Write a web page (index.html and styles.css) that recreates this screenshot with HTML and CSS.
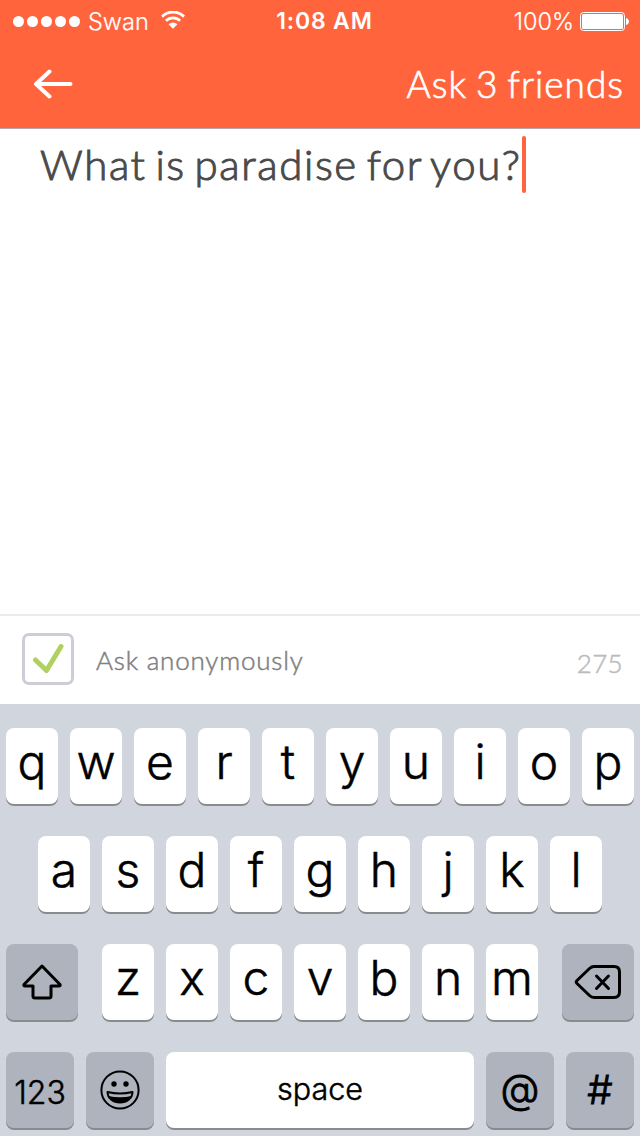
FILE: index.html
```html
<!DOCTYPE html>
<html lang="en">
<head>
    <meta charset="UTF-8">
    <meta name="viewport" content="width=device-width, initial-scale=1.0">
    <title>Ask friends</title>
    <link rel="stylesheet" href="styles.css">
</head>
<body>
    <div class="screen">
        <header class="header">
            <div class="status">
                <div class="carrier">
                    <div class="signal"><i></i><i></i><i></i><i></i><i></i></div>
                    <span class="carrier-name">Swan</span>
                    <svg class="wifi" width="24" height="18" viewBox="0 0 24 18">
                        <path d="M1 5.6a15.6 15.6 0 0 1 22 0" fill="none" stroke="#fff" stroke-width="2.9"/>
                        <path d="M4.9 9.8a10 10 0 0 1 14.2 0" fill="none" stroke="#fff" stroke-width="2.7"/>
                        <path d="M12 17.8L7.6 13.3a6.3 6.3 0 0 1 8.8 0z" fill="#fff"/>
                    </svg>
                </div>
                <div class="time">1:08 AM</div>
                <div class="power">
                    <span class="percent">100%</span>
                    <svg class="battery" width="49" height="19" viewBox="0 0 49 19">
                        <rect x=".5" y=".5" width="44" height="18" rx="3" fill="none" stroke="#fff"/>
                        <rect x="2" y="2" width="41" height="15" rx="1.5" fill="#fff"/>
                        <path d="M46 6c4 1 4 6 0 7z" fill="#fff"/>
                    </svg>
                </div>
            </div>
            <div class="nav">
                <svg class="back" width="40" height="30" viewBox="0 0 40 30" fill="none" stroke="#fff" stroke-width="4" stroke-linecap="round" stroke-linejoin="round">
                    <path d="M16.500 2.500L3 15l13.500 12.500M4 15h33.500"/>
                </svg>
                <div class="nav-action">Ask 3 friends</div>
            </div>
        </header>

        <main class="editor">
            <span class="question">What is paradise for you?</span><span class="caret"></span>
        </main>

        <div class="options">
            <div class="checkbox">
                <svg width="32" height="30" viewBox="0 0 32 30" fill="none" stroke="#b0d15f" stroke-width="5" stroke-linecap="round" stroke-linejoin="round">
                    <path d="M3.500 16L14.500 26.500L29 2.500"/>
                </svg>
            </div>
            <span class="anon">Ask anonymously</span>
            <span class="count">275</span>
        </div>

        <div class="keyboard">
            <div class="row">
                <div class="key">q</div><div class="key">w</div><div class="key">e</div><div class="key">r</div><div class="key">t</div><div class="key">y</div><div class="key">u</div><div class="key">i</div><div class="key">o</div><div class="key">p</div>
            </div>
            <div class="row">
                <div class="key">a</div><div class="key">s</div><div class="key">d</div><div class="key">f</div><div class="key">g</div><div class="key">h</div><div class="key">j</div><div class="key">k</div><div class="key">l</div>
            </div>
            <div class="row row-shift">
                <div class="key dark wide">
                    <svg width="40" height="36" viewBox="0 0 40 36" fill="none" stroke="#000" stroke-width="3" stroke-linejoin="round">
                        <path d="M20 2L38 20.500Q38.500 22 37 22H29V32Q29 34 27 34H13Q11 34 11 32V22H3Q1.500 22 2 20.500Z"/>
                    </svg>
                </div>
                <div class="letters">
                    <div class="key">z</div><div class="key">x</div><div class="key">c</div><div class="key">v</div><div class="key">b</div><div class="key">n</div><div class="key">m</div>
                </div>
                <div class="key dark wide">
                    <svg width="48" height="36" viewBox="0 0 48 36" fill="none" stroke="#000" stroke-width="3" stroke-linejoin="round" stroke-linecap="round">
                        <path d="M20 2.500H40Q45.500 2.500 45.500 8V28Q45.500 33.500 40 33.500H20Q17.500 33.500 15.500 31.500L3 19.500Q1.500 18 3 16.500L15.500 4.500Q17.500 2.500 20 2.500Z"/>
                        <path d="M22.500 12L34.500 24.500M34.500 12L22.500 24.500"/>
                    </svg>
                </div>
            </div>
            <div class="row">
                <div class="key dark mode">123</div>
                <div class="key dark emoji">
                    <svg width="40" height="40" viewBox="0 0 40 40">
                        <circle cx="20" cy="20" r="18.600" fill="none" stroke="#000" stroke-width="2"/>
                        <circle cx="14" cy="14" r="2.700"/>
                        <circle cx="26" cy="14" r="2.700"/>
                        <path d="M7.500 22Q20 25 32.500 22C32.500 28 27 32.500 20 32.500S7.500 28 7.500 22Z" fill="none" stroke="#000" stroke-width="2" stroke-linejoin="round"/>
                        <path d="M8.500 26Q20 28.500 31.500 26Q28 32.500 20 32.500T8.500 26Z"/>
                    </svg>
                </div>
                <div class="key space">space</div>
                <div class="key dark at">@</div>
                <div class="key dark hash">#</div>
            </div>
        </div>
    </div>
</body>
</html>
```
FILE: styles.css
```css
* {
    box-sizing: border-box;
}
body {
    margin: 0;
    background-color: #fff;
    font-family: Inter, "Liberation Sans", sans-serif;
}
.screen {
    display: flex;
    flex-direction: column;
    width: 640px;
    height: 1136px;
    overflow: hidden;
}
svg {
    display: block;
    flex-shrink: 0;
}

/* header */
.header {
    height: 129px;
    background-color: #ff643c;
    border-bottom: 1px solid #b2aaa8;
    color: #fff;
}
.status {
    display: grid;
    grid-template-columns: 1fr auto 1fr;
    align-items: center;
    height: 41px;
    padding: 0 11px 0 13px;
    font-size: 24px;
    line-height: 41px;
}
.carrier, .power {
    display: flex;
    align-items: center;
}
.power {
    justify-content: flex-end;
    gap: 6px;
}
.signal {
    display: flex;
    gap: 3px;
    margin-right: 8px;
}
.signal i {
    width: 11px;
    height: 11px;
    border-radius: 50%;
    background-color: #fff;
}
.carrier-name {
    font-size: 23.5px;
    font-weight: 300;
    margin-right: 12px;
    -webkit-text-stroke: 0.2px #fff;
}
.wifi {
    margin-top: -2px;
}
.time {
    padding: 1px 0 0 7px;
    font-size: 23px;
    font-weight: 600;
    letter-spacing: 0.8px;
}
.percent {
    font-weight: 300;
    font-size: 23.5px;
    -webkit-text-stroke: 0.2px #fff;
}
.nav {
    display: flex;
    align-items: center;
    justify-content: space-between;
    height: 87px;
    padding: 0 16px 0 33px;
}
.back {
    margin-top: -2px;
}
.nav-action {
    margin-top: -3px;
    font-family: Lato, sans-serif;
    font-size: 37px;
    font-weight: 300;
    letter-spacing: 1px;
    word-spacing: -2.2px;
    -webkit-text-stroke: 0.7px #fff;
}

/* question */
.editor {
    display: flex;
    align-items: flex-start;
    flex: 1;
    padding: 7px 40px;
}
.question {
    font-family: Lato, sans-serif;
    font-size: 42px;
    font-weight: 300;
    line-height: 57px;
    letter-spacing: 1.6px;
    word-spacing: -4.2px;
    white-space: nowrap;
    color: #4a4a4a;
    -webkit-text-stroke: 1px #4a4a4a;
}
.caret {
    width: 4px;
    height: 57px;
    border-radius: 2px;
    background-color: #ff643c;
}

.options {
    display: flex;
    align-items: center;
    height: 90px;
    padding: 0 17px 2px 22px;
    border-top: 2px solid #ebebeb;
    font-family: Lato, sans-serif;
    font-size: 26px;
    font-weight: 300;
}
.checkbox {
    display: flex;
    align-items: center;
    justify-content: center;
    width: 52px;
    height: 52px;
    margin-right: 22px;
    border: 3px solid #cdcdd8;
    border-radius: 7px;
}
.anon {
    padding-top: 2px;
    color: #808080;
    letter-spacing: 0.8px;
    -webkit-text-stroke: 0.5px #808080;
}
.count {
    margin-left: auto;
    padding-top: 8px;
    color: #bbb;
    letter-spacing: 0.3px;
    -webkit-text-stroke: 0.5px #bbb;
}

/* keyboard */
.keyboard {
    display: flex;
    flex-direction: column;
    gap: 32px;
    height: 432px;
    padding: 24px 6px 0;
    background-color: #d1d5dd;
}
.row {
    display: flex;
    justify-content: center;
    gap: 12px;
}
.row-shift {
    justify-content: space-between;
}
.letters {
    display: flex;
    gap: 12px;
}
.key {
    display: flex;
    align-items: center;
    justify-content: center;
    width: 52px;
    height: 76px;
    padding-bottom: 8px;
    border-radius: 8px;
    background-color: #fff;
    box-shadow: 0 2px 0 #898b8f;
    color: #000;
    font-size: 48px;
    font-weight: 300;
    line-height: 68px;
    -webkit-text-stroke: 0.5px #000;
}
.dark {
    width: 68px;
    padding-bottom: 0;
    background-color: #aeb3be;
}
.wide {
    width: 72px;
}
.mode {
    padding-top: 5px;
    font-size: 32px;
}
.space {
    width: 308px;
    padding-bottom: 2px;
    font-size: 30.5px;
}
.at {
    padding-bottom: 2px;
    font-size: 40px;
    -webkit-text-stroke: 0.9px #000;
}
.hash {
    font-size: 40px;
    -webkit-text-stroke: 0.9px #000;
}
```
